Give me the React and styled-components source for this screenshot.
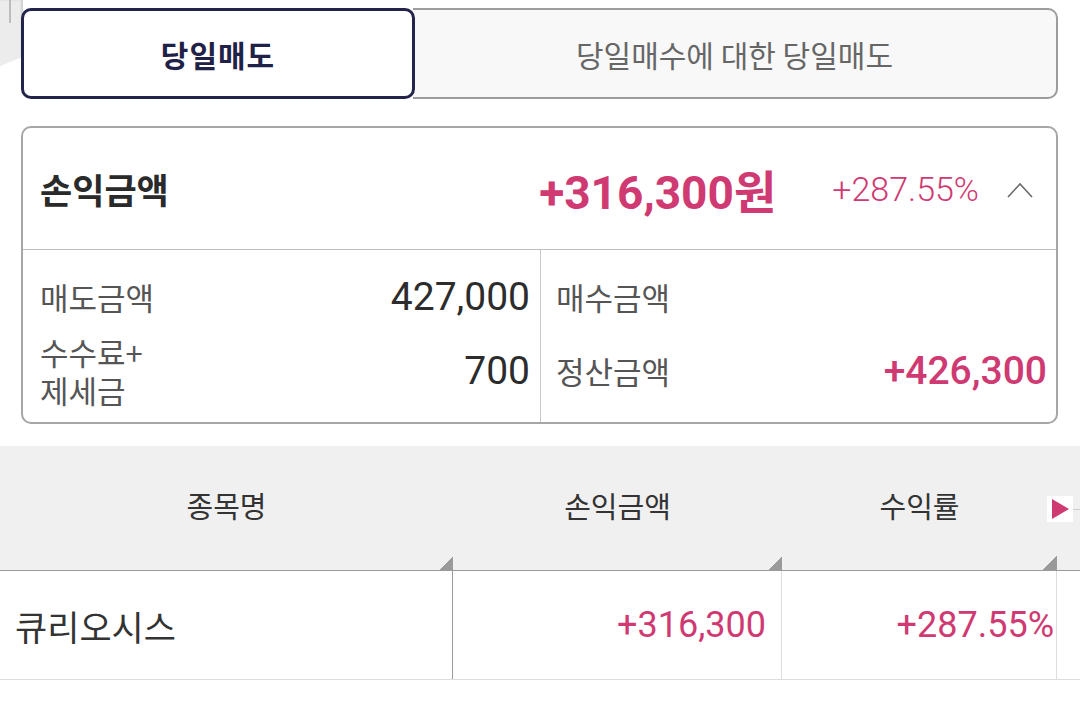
import styled, { createGlobalStyle } from "styled-components";

const GlobalStyle = createGlobalStyle`
    body {
        margin: 0;
        background: #ffffff;
        font-family: Roboto, "Noto Sans CJK KR", sans-serif;
        color: #333333;
    }
`;

const PINK = "#cf3a72";

const rows = [
    { name: "큐리오시스", amount: "+316,300", rate: "+287.55%" },
];

const App = () => {
    return (
        <Page>
            <GlobalStyle />
            <EdgeScrap />
            <Tabs>
                <Tab active>당일매도</Tab>
                <Tab>당일매수에 대한 당일매도</Tab>
            </Tabs>

            <Card>
                <CardHead>
                    <HeadLabel>손익금액</HeadLabel>
                    <HeadAmount>+316,300원</HeadAmount>
                    <HeadRate>+287.55%</HeadRate>
                    <Chevron viewBox="0 0 26 16" width="26" height="16">
                        <polyline points="1,15 13,2 25,15" fill="none" stroke="#6a6a6a" strokeWidth="1.6" />
                    </Chevron>
                </CardHead>
                <CardBody>
                    <Column>
                        <DetailRow>
                            <DetailLabel>매도금액</DetailLabel>
                            <DetailValue>427,000</DetailValue>
                        </DetailRow>
                        <DetailRow tall>
                            <DetailLabel>
                                <LabelLine>수수료+</LabelLine>
                                <LabelLine>제세금</LabelLine>
                            </DetailLabel>
                            <DetailValue>700</DetailValue>
                        </DetailRow>
                    </Column>
                    <Column right>
                        <DetailRow>
                            <DetailLabel>매수금액</DetailLabel>
                            <DetailValue></DetailValue>
                        </DetailRow>
                        <DetailRow tall>
                            <DetailLabel>정산금액</DetailLabel>
                            <DetailValue pink>+426,300</DetailValue>
                        </DetailRow>
                    </Column>
                </CardBody>
            </Card>

            <Table>
                <HeaderRow>
                    <HeaderCell>종목명</HeaderCell>
                    <HeaderCell>손익금액</HeaderCell>
                    <HeaderCell>수익률</HeaderCell>
                    <HeaderTail>
                        <PlayMark viewBox="0 0 20 24" width="20" height="24">
                            <polygon points="2,2 19,12 2,22" fill={PINK} />
                        </PlayMark>
                        <TailLine />
                    </HeaderTail>
                </HeaderRow>
                {rows.map((row, index) => (
                    <DataRow key={`row${index}`}>
                        <NameCell>{row.name}</NameCell>
                        <NumCell>{row.amount}</NumCell>
                        <NumCell last>{row.rate}</NumCell>
                        <TailCell />
                    </DataRow>
                ))}
            </Table>
        </Page>
    );
};

export default App;

const Page = styled.div`
    position: relative;
    width: 1080px;
    height: 722px;
    overflow: hidden;
    padding-top: 8px;
    box-sizing: border-box;
`;

const EdgeScrap = styled.div`
    position: absolute;
    left: 0;
    top: 0;
    width: 23px;
    height: 66px;
    background: #ececec;
    clip-path: polygon(0 0, 100% 0, 100% 86%, 0 100%);
    box-shadow: inset -2px 0 2px rgba(0, 0, 0, 0.12);
    &::before {
        content: "";
        position: absolute;
        left: 9px;
        top: 0;
        width: 2px;
        height: 23px;
        background: #bdbdbd;
    }
`;

const Tabs = styled.div`
    position: relative;
    display: flex;
    margin: 0 22px 0 21px;
    height: 91px;
`;

const Tab = styled.div`
    display: flex;
    align-items: center;
    justify-content: center;
    box-sizing: border-box;
    font-family: "Noto Sans CJK KR", sans-serif;
    font-size: 30px;
    ${(p) =>
        p.active
            ? `
        width: 394px;
        border: 3px solid #23244b;
        border-radius: 10px;
        background: #ffffff;
        color: #1f2147;
        font-weight: 700;
        letter-spacing: 1px;
        z-index: 1;
    `
            : `
        flex: 1;
        margin-left: -2px;
        border: 2px solid #9c9c9c;
        border-left: none;
        border-radius: 0 10px 10px 0;
        background: #f8f8f8;
        color: #666666;
        font-weight: 400;
    `}
`;

const Card = styled.div`
    margin: 27px 22px 0 21px;
    height: 298px;
    box-sizing: border-box;
    border: 2px solid #a6a6a6;
    border-radius: 10px;
    display: flex;
    flex-direction: column;
    overflow: hidden;
`;

const CardHead = styled.div`
    display: flex;
    align-items: center;
    height: 122px;
    box-sizing: border-box;
    padding: 0 23px 0 17px;
    border-bottom: 1.5px solid #bdbdbd;
`;

const HeadLabel = styled.div`
    flex: 1;
    font-family: "Noto Sans CJK KR", sans-serif;
    font-size: 35px;
    font-weight: 700;
    color: #2a2a2a;
`;

const HeadAmount = styled.div`
    font-size: 46px;
    font-weight: 700;
    color: ${PINK};
`;

const HeadRate = styled.div`
    margin-left: 56px;
    font-size: 34px;
    font-weight: 300;
    color: ${PINK};
`;

const Chevron = styled.svg`
    margin-left: 28px;
    margin-top: 2px;
`;

const CardBody = styled.div`
    flex: 1;
    display: grid;
    grid-template-columns: 517px 1fr;
`;

const Column = styled.div`
    display: flex;
    flex-direction: column;
    padding: 17px ${(p) => (p.right ? "9px" : "10px")} 0 ${(p) => (p.right ? "15px" : "17px")};
    border-left: ${(p) => (p.right ? "1.5px solid #c8c8c8" : "none")};
`;

const DetailRow = styled.div`
    display: flex;
    align-items: center;
    justify-content: space-between;
    height: ${(p) => (p.tall ? "76px" : "60px")};
    margin-bottom: 6px;
`;

const DetailLabel = styled.div`
    font-family: "Noto Sans CJK KR", sans-serif;
    font-size: 31px;
    line-height: 38px;
    color: #555555;
`;

const LabelLine = styled.div`
    height: 38px;
    line-height: 38px;
`;

const DetailValue = styled.div`
    font-size: 39px;
    font-weight: ${(p) => (p.pink ? 500 : 400)};
    color: ${(p) => (p.pink ? PINK : "#2c2c2c")};
`;

const Table = styled.div`
    margin-top: 22px;
`;

const HeaderRow = styled.div`
    display: grid;
    grid-template-columns: 453px 329px 275px 1fr;
    height: 125px;
    background: #f0f0f0;
    border-bottom: 1.5px solid #9a9a9a;
    box-sizing: border-box;
`;

const HeaderCell = styled.div`
    display: flex;
    align-items: center;
    justify-content: center;
    padding-bottom: 6px;
    font-family: "Noto Sans CJK KR", sans-serif;
    font-size: 29px;
    color: #333333;
    background: linear-gradient(135deg, transparent 50%, #9a9a9a 50%) no-repeat right bottom / 14px 14px;
`;

const HeaderTail = styled.div`
    display: flex;
    align-items: center;
    padding-top: 2px;
    margin-left: -10px;
`;

const PlayMark = styled.svg`
    display: block;
    flex-shrink: 0;
    background: #ffffff;
    padding: 1px 3px 1px 3px;
`;

const TailLine = styled.div`
    flex: 1;
    height: 1px;
    background: #cfcfcf;
`;

const DataRow = styled.div`
    display: grid;
    grid-template-columns: 453px 329px 275px 1fr;
    height: 109px;
    border-bottom: 1.5px solid #dddddd;
    box-sizing: border-box;
`;

const NameCell = styled.div`
    display: flex;
    align-items: center;
    padding-left: 15px;
    font-family: "Noto Sans CJK KR", sans-serif;
    font-size: 35px;
    color: #333333;
    border-right: 1.5px solid #9a9a9a;
`;

const NumCell = styled.div`
    display: flex;
    align-items: center;
    justify-content: flex-end;
    padding-right: ${(p) => (p.last ? "2px" : "15px")};
    font-size: 36px;
    color: ${PINK};
    border-right: 1.5px solid #dddddd;
`;

const TailCell = styled.div``;
